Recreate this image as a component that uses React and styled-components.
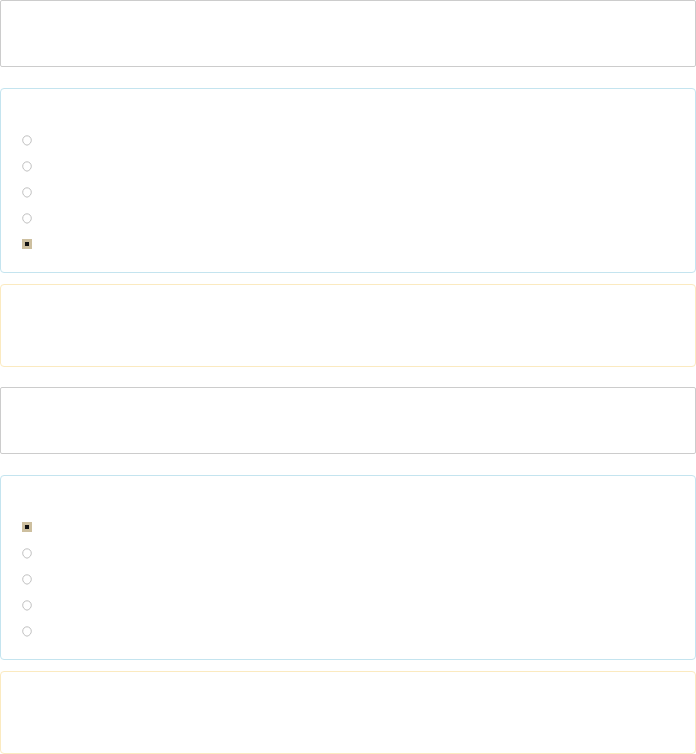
import styled, { createGlobalStyle } from "styled-components";

const GlobalStyle = createGlobalStyle`
  html, body {
    margin: 0;
    padding: 0;
    background: #ffffff;
    font-family: "Liberation Sans", Arial, sans-serif;
  }
`;

const BORDER = {
  plain: "#cccccc",
  info: "#c4e4ef",
  warn: "#fbeac0",
};

function Radio({ checked }) {
  if (checked) {
    return (
      <RadioBox>
        <svg width="10" height="10" viewBox="0 0 10 10">
          <rect x="0" y="0" width="10" height="10" fill="#cdbf9f" />
          <rect x="3" y="3" width="4" height="4" fill="#111111" />
        </svg>
      </RadioBox>
    );
  }
  return (
    <RadioBox>
      <svg width="10" height="11" viewBox="0 0 10 11">
        <path
          d="M5 10.2 C2.4 9.6 0.7 7.6 0.7 5.2 C0.7 2.7 2.6 0.8 5 0.8 C7.4 0.8 9.3 2.7 9.3 5.2 C9.3 7.6 7.6 9.6 5 10.2 Z"
          fill="#ffffff"
          stroke="#b9b9b9"
          strokeWidth="0.9"
        />
      </svg>
    </RadioBox>
  );
}

function Question({ selected }) {
  return (
    <>
      <Panel $tone="plain" $height={67} $gap={21} />
      <Panel $tone="info" $height={185} $gap={11}>
        <Options>
          {[0, 1, 2, 3, 4].map((i) => (
            <Option key={i}>
              <Radio checked={i === selected} />
            </Option>
          ))}
        </Options>
      </Panel>
      <Panel $tone="warn" $height={83} $gap={20} />
    </>
  );
}

export default function App() {
  return (
    <Page>
      <GlobalStyle />
      <Question selected={4} />
      <Question selected={0} />
    </Page>
  );
}

const Page = styled.div`
  display: flex;
  flex-direction: column;
  width: 696px;
`;

const Panel = styled.div`
  box-sizing: border-box;
  width: 696px;
  height: ${(p) => p.$height}px;
  margin-bottom: ${(p) => p.$gap}px;
  border: 1px solid ${(p) => BORDER[p.$tone]};
  border-radius: ${(p) => (p.$tone === "plain" ? "2px" : "4px")};
  background: #ffffff;
`;

const Options = styled.div`
  display: flex;
  flex-direction: column;
  padding: 38px 0 0 21px;
`;

const Option = styled.div`
  display: flex;
  align-items: center;
  height: 26px;
`;

const RadioBox = styled.span`
  display: inline-flex;
  align-items: center;
  justify-content: center;
  width: 10px;
  height: 11px;
`;
